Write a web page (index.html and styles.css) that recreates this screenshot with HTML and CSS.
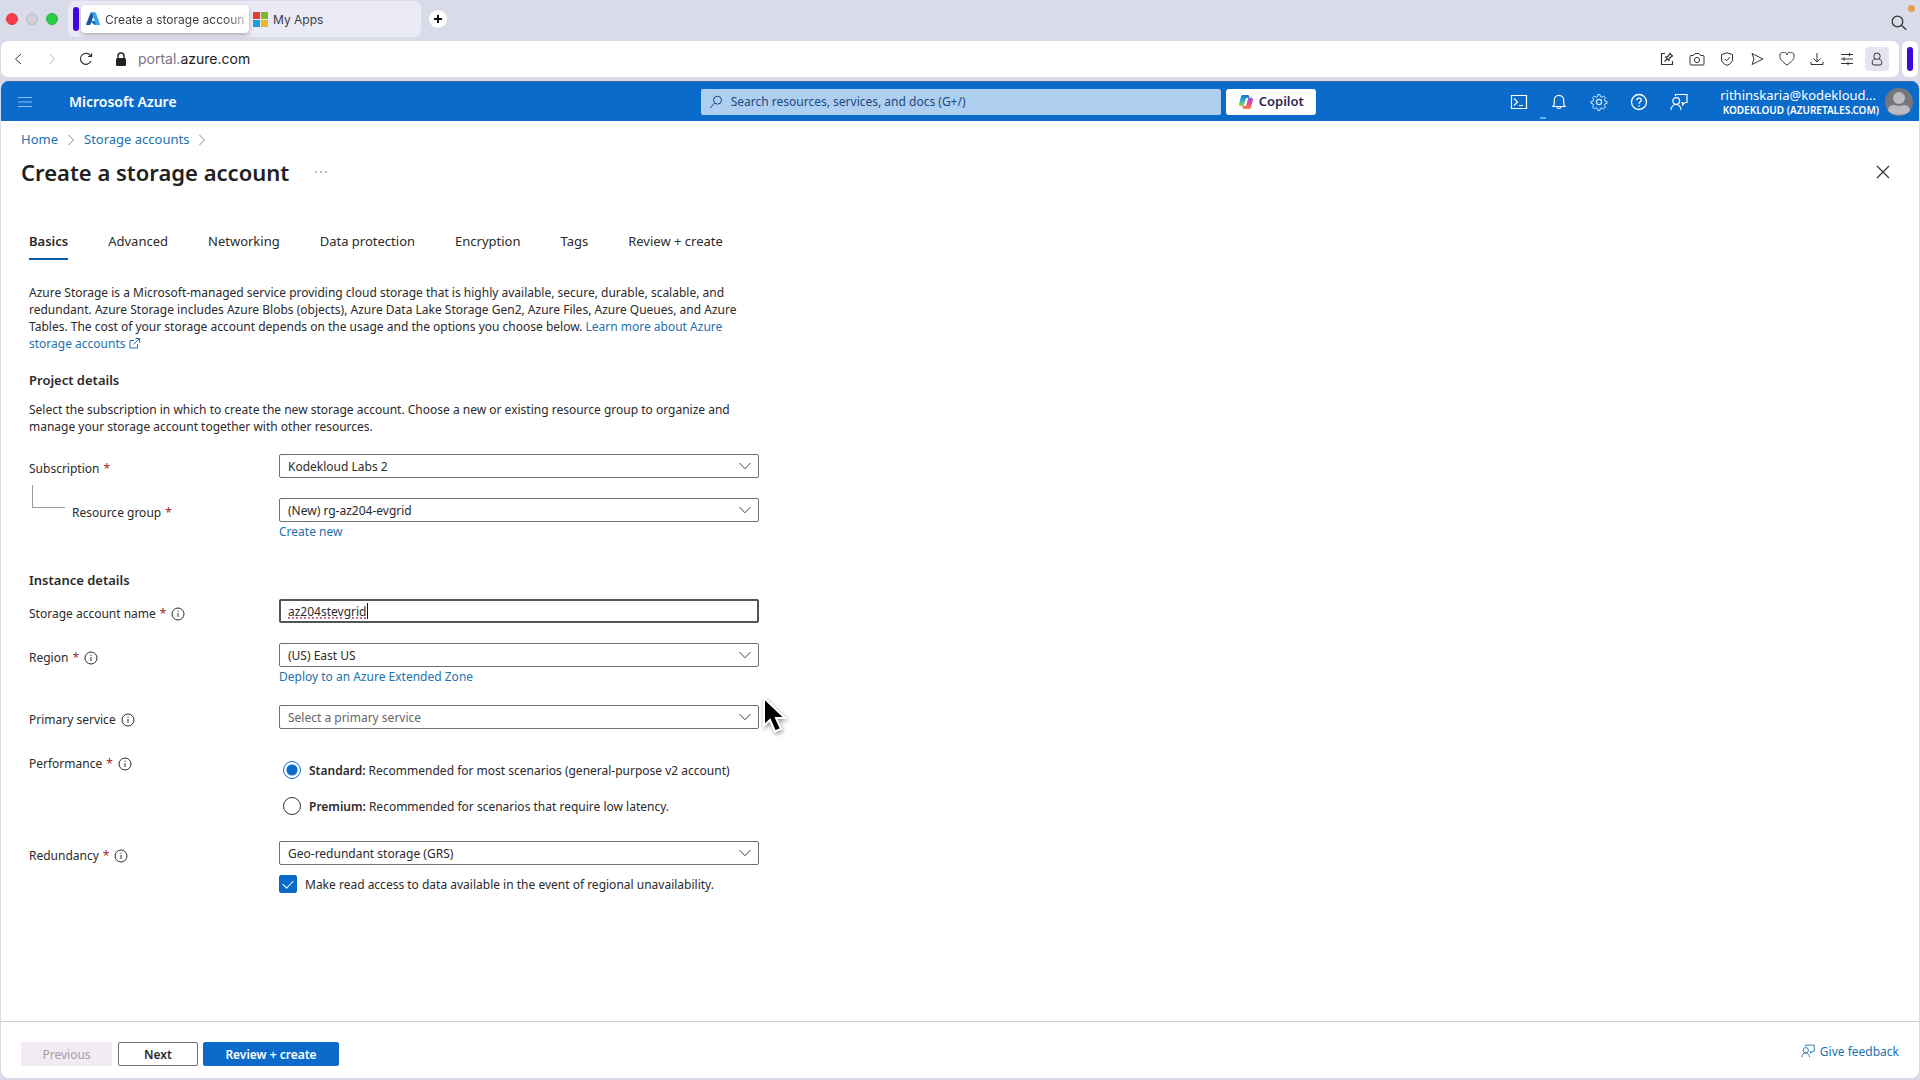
FILE: index.html
```html
<!DOCTYPE html>
<html lang="en">
<head>
<meta charset="utf-8">
<title>Create a storage account - Microsoft Azure</title>
<link rel="stylesheet" href="styles.css">
</head>
<body>
<svg class="sprite" aria-hidden="true">
  <symbol id="i-info" viewBox="0 0 14 14"><circle cx="7" cy="7" r="6" fill="none" stroke="currentColor"/><path d="M7 6v4M7 3.6v1.2" stroke="currentColor" fill="none"/></symbol>
  <symbol id="i-down" viewBox="0 0 12 12"><path d="M.5 3 6 8.800l5.500-5.800" stroke="currentColor" fill="none"/></symbol>
  <symbol id="i-right" viewBox="0 0 8 12"><path d="M1.500 1 6.500 6l-5 5" stroke="currentColor" fill="none"/></symbol>
  <symbol id="i-feedback" viewBox="0 0 18 18"><path d="M5.500 3V1.500H17v8h-2.200L12.500 12V9.500h-1.200M1 17c0-3 2.200-5.500 5-5.500s5 2.500 5 5.500" stroke="currentColor" fill="none" stroke-width="1.200"/><circle cx="6.200" cy="8" r="3.400" fill="none" stroke="currentColor" stroke-width="1.200"/></symbol>
</svg>

<header class="tabstrip">
  <div class="lights">
    <button class="light light-close" aria-label="Close window"></button>
    <button class="light light-min" aria-label="Minimize window"></button>
    <button class="light light-max" aria-label="Zoom window"></button>
  </div>
  <div class="island">
    <span class="island-bar"></span>
    <button class="btab btab-active">
      <svg width="14" height="14" viewBox="0 0 14 14"><path d="M4.800.5h4L4.600 12.300a.8.8 0 0 1-.8.600H.8a.7.7 0 0 1-.7-1z" fill="#155a9c"/><path d="M9.500 9H4.200L8 12.800l3 .2z" fill="#1672bd"/><path d="M9.200.5H5.400c.4.1.6.3.7.6l3.700 11c.1.400-.1.800-.5.900h4c.5 0 .8-.5.600-1L10 1.100A.8.800 0 0 0 9.200.5z" fill="#37a5e8"/></svg>
      <span class="btab-text">Create a storage accoun</span>
    </button>
    <button class="btab">
      <svg width="15" height="15" viewBox="0 0 15 15"><path fill="#e23b36" d="M0 0h7v7H0z"/><path fill="#7fb928" d="M8 0h7v7H8z"/><path fill="#189fd9" d="M0 8h7v7H0z"/><path fill="#efb52b" d="M8 8h7v7H8z"/></svg>
      <span>My Apps</span>
    </button>
  </div>
  <button class="newtab" aria-label="New tab"><svg width="8" height="8" viewBox="0 0 8 8"><path d="M4 0v8M0 4h8" stroke="#111" stroke-width="2"/></svg></button>
  <span class="spacer"></span>
  <button class="plain find" aria-label="Search tabs"><svg width="16" height="16" viewBox="0 0 16 16"><g fill="none" stroke="#333" stroke-width="1.300"><circle cx="6.500" cy="6.500" r="5.300"/><path d="m10.500 10.500 4.800 4.300"/></g></svg></button>
  <span class="rec-dot"></span>
</header>

<div class="urlrow">
  <nav class="urlbar">
    <button class="plain nav" aria-label="Back"><svg width="8" height="12" viewBox="0 0 8 12"><path d="M7 1 1.500 6 7 11" fill="none" stroke="#333"/></svg></button>
    <button class="plain nav nav-off" aria-label="Forward" disabled><svg width="8" height="12" viewBox="0 0 8 12"><path d="m1.500 1 5 5-5 5" fill="none" stroke="currentColor"/></svg></button>
    <button class="plain nav" aria-label="Reload"><svg width="14" height="14" viewBox="0 0 14 14"><path d="M11.800 4.200A5.500 5.500 0 1 0 12 9M9 4.500h3.500V1.200" fill="none" stroke="#333" stroke-width="1.200"/></svg></button>
    <button class="plain address"><svg width="12" height="15" viewBox="0 0 12 15"><path d="M3 7V4a3 3 0 0 1 6 0v3" fill="none" stroke="#222" stroke-width="1.400"/><rect x="1" y="6" width="10" height="8" rx="1.500" fill="#222"/></svg><span><span class="sub">portal.</span>azure.com</span></button>
    <span class="spacer"></span>
    <div class="tools">
      <button class="plain tool" aria-label="Edit"><svg width="14" height="14" viewBox="0 0 14 14"><path d="M5 1.500H1.500v11h11V9M4.500 9.500l2.700-2.700M5.600 5.200l3.300 3.300.5-2.300 3.100-2.200-2.500-2.500-2.200 3.200z" fill="none" stroke="#333" stroke-width="1.200"/></svg></button>
      <button class="plain tool" aria-label="Snapshot"><svg width="16" height="14" viewBox="0 0 16 14"><path d="M1 12V4.500q0-1 1-1h2.500L6 1.500h4l1.500 2H14q1 0 1 1V12q0 1-1 1H2q-1 0-1-1z" fill="none" stroke="#333"/><circle cx="8" cy="8" r="2.600" fill="none" stroke="#333"/></svg></button>
      <button class="plain tool" aria-label="Protection"><svg width="14" height="14" viewBox="0 0 14 14"><path d="m7 .8 5.500 1.700V7c0 3-2 5-5.500 6.300C3.500 12 1.500 10 1.500 7V2.500zM4.500 6.800l2 2 3.300-3.600" fill="none" stroke="#333"/></svg></button>
      <button class="plain tool" aria-label="Send"><svg width="14" height="14" viewBox="0 0 14 14"><path d="M2 1.500 13 7 2 12.500 4 7z" fill="none" stroke="#333" stroke-linejoin="round"/></svg></button>
      <button class="plain tool" aria-label="Favourite"><svg width="16" height="14" viewBox="0 0 16 14"><path d="M8 13C3 9.500 1 7.200 1 4.700A3.600 3.600 0 0 1 8 3a3.600 3.600 0 0 1 7 1.700C15 7.200 13 9.500 8 13z" fill="none" stroke="#333"/></svg></button>
      <button class="plain tool" aria-label="Downloads"><svg width="14" height="14" viewBox="0 0 14 14"><path d="M7 1v8.500M3.500 6.500 7 10l3.500-3.500M1 10v2.500h12V10" fill="none" stroke="#333"/></svg></button>
      <button class="plain tool" aria-label="Setup"><svg width="14" height="14" viewBox="0 0 14 14"><path d="M1 2.500h12M1 7h12M1 11.500h12M9.500.8v3.400M4 5.300v3.400M8 9.800v3.400" fill="none" stroke="#333"/></svg></button>
      <button class="plain tool tool-on" aria-label="Profile"><svg width="14" height="14" viewBox="0 0 14 14"><circle cx="7" cy="4.200" r="3.200" fill="none" stroke="#333"/><path d="M5 6.800C3 7.500 2.200 9 2.200 11q0 2 1.800 2h6q1.800 0 1.800-2c0-2-.8-3.500-2.800-4.200" fill="none" stroke="#333"/></svg></button>
    </div>
  </nav>
  <div class="sidebox"><span class="sidebox-bar"></span></div>
</div>

<div class="portal">
  <header class="azure">
    <div class="azure-left">
      <button class="plain menu" aria-label="Show portal menu"><svg width="14" height="12" viewBox="0 0 14 12"><path d="M0 1.500h14M0 6h14M0 10.500h14" stroke="#8ec0f2"/></svg></button>
      <a class="brand" href="#">Microsoft Azure</a>
    </div>
    <div class="azure-mid">
      <label class="search"><svg width="14" height="14" viewBox="0 0 14 14"><g fill="none" stroke="#1b4a80"><circle cx="8.500" cy="5.200" r="4"/><path d="M5.600 8.200 1 13"/></g></svg><input type="text" aria-label="Search" placeholder="Search resources, services, and docs (G+/)"></label>
      <button class="copilot"><svg width="16" height="16" viewBox="0 0 16 16"><defs><linearGradient id="g1" x2="0" y2="1"><stop stop-color="#1a6fd6"/><stop offset=".5" stop-color="#2bb4c4"/><stop offset="1" stop-color="#b8cf2e"/></linearGradient><linearGradient id="g2" x2="0" y2="1"><stop stop-color="#9a4fe0"/><stop offset=".5" stop-color="#e5489a"/><stop offset="1" stop-color="#f5873f"/></linearGradient></defs><path d="M5 1h4.500c1 0 1.500.5 1.700 1.300L11.600 4H9.500C8.300 4 7.700 4.700 7.400 5.700L6 11c-.3.900-.9 1.200-1.700 1.200H3C1.400 12.200.7 11 1.200 9.400L2.900 3C3.300 1.600 3.900 1 5 1z" fill="url(#g1)"/><path d="M11 15H6.500c-1 0-1.500-.5-1.700-1.300L4.400 12h2.100c1.200 0 1.800-.7 2.100-1.700L10 5c.3-.9.900-1.200 1.700-1.200H13c1.600 0 2.300 1.200 1.800 2.800L13.100 13c-.4 1.400-1 2-2.100 2z" fill="url(#g2)"/></svg>Copilot</button>
    </div>
    <div class="azure-right">
      <button class="plain act" aria-label="Cloud Shell"><svg width="18" height="16" viewBox="0 0 18 16"><path d="M1.500 1.500h15v13h-15zM4 4.500 7.500 8 4 11.500M9 11.500h4" fill="none" stroke="#fff" stroke-width="1.200"/></svg></button>
      <button class="plain act" aria-label="Notifications"><svg width="14" height="16" viewBox="0 0 14 16"><path d="M1 12.500h12c-1-1-1.300-2-1.300-3.500V6a4.700 4.700 0 0 0-9.400 0v3c0 1.500-.3 2.500-1.300 3.500zM5 13c.3 2 3.700 2 4 0" fill="none" stroke="#fff" stroke-width="1.200"/></svg><span class="act-mark"></span></button>
      <button class="plain act" aria-label="Settings"><svg width="18" height="18" viewBox="0 0 18 18"><circle cx="9" cy="9" r="2.600" fill="none" stroke="#d8eaff" stroke-width="1.200"/><path d="m7.700 1.500.4 0h1.800l.5 2 1.400.6 1.900-1 1.700 1.700-1 1.900.6 1.400 2 .5v1.800l-2 .5-.6 1.400 1 1.900-1.700 1.700-1.900-1-1.400.6-.5 2H8.100l-.5-2-1.400-.6-1.900 1-1.700-1.700 1-1.900-.6-1.400-2-.5V8.600l2-.5.6-1.400-1-1.900 1.700-1.700 1.900 1 1.400-.6z" fill="none" stroke="#d8eaff" stroke-linejoin="round"/></svg></button>
      <button class="plain act" aria-label="Help"><svg width="18" height="18" viewBox="0 0 18 18"><g fill="none" stroke="#fff" stroke-width="1.300"><circle cx="9" cy="9" r="7.500"/><path d="M6.700 7.300c0-3 4.800-2.900 4.600-.2C11.200 8.700 9 8.800 9 10.800M9 12v1.500"/></g></svg></button>
      <button class="plain act" aria-label="Feedback"><svg width="18" height="18"><use href="#i-feedback"/></svg></button>
      <button class="plain account">
        <span class="who"><span class="who-name">rithinskaria@kodekloud...</span><span class="who-org">KODEKLOUD (AZURETALES.COM)</span></span>
        <svg width="28" height="28" viewBox="0 0 28 28"><clipPath id="av"><circle cx="14" cy="14" r="14"/></clipPath><g clip-path="url(#av)"><path fill="#77767c" d="M0 0h28v28H0z"/><circle cx="14" cy="10" r="6" fill="#bcbbc1"/><path d="M3 23q0-6 6-6 5 2 10 0 6 0 6 6c-3 5-19 5-22 0z" fill="#bcbbc1"/></g></svg>
      </button>
    </div>
  </header>

  <nav class="crumbs">
    <a href="#">Home</a><svg width="8" height="12"><use href="#i-right"/></svg>
    <a href="#">Storage accounts</a><svg width="8" height="12"><use href="#i-right"/></svg>
  </nav>
  <div class="titlebar">
    <h1>Create a storage account</h1>
    <button class="plain more" aria-label="More actions"><svg width="12" height="2" viewBox="0 0 12 2"><path d="M1 0v2M6 0v2M11 0v2" stroke="#777" stroke-width="1"/></svg></button>
    <span class="spacer"></span>
    <button class="plain" aria-label="Close"><svg width="14" height="14" viewBox="0 0 14 14"><path d="m1 1 12 12M13 1 1 13" stroke="#333" stroke-width="1.200"/></svg></button>
  </div>

  <main class="form">
    <div class="tabs" role="tablist">
      <button class="tab tab-on" role="tab">Basics</button>
      <button class="tab" role="tab">Advanced</button>
      <button class="tab" role="tab">Networking</button>
      <button class="tab" role="tab">Data protection</button>
      <button class="tab" role="tab">Encryption</button>
      <button class="tab" role="tab">Tags</button>
      <button class="tab" role="tab">Review + create</button>
    </div>

    <p class="intro">Azure Storage is a Microsoft-managed service providing cloud storage that is highly available, secure, durable, scalable, and<br>redundant. Azure Storage includes Azure Blobs (objects), Azure Data Lake Storage Gen2, Azure Files, Azure Queues, and Azure<br>Tables. The cost of your storage account depends on the usage and the options you choose below. <a href="#">Learn more about Azure<br>storage accounts <svg width="11" height="11" viewBox="0 0 11 11"><path d="M5 2.500H1v7.500h7.500V6M6.500.5h4v4M10.500.5 4.500 6.500" fill="none" stroke="currentColor"/></svg></a></p>

    <h2>Project details</h2>
    <p class="lead">Select the subscription in which to create the new storage account. Choose a new or existing resource group to organize and<br>manage your storage account together with other resources.</p>

    <div class="row">
      <label class="name" for="sub">Subscription <span class="req">*</span></label>
      <div class="field"><div class="combo"><select id="sub"><option>Kodekloud Labs 2</option></select><svg width="12" height="12"><use href="#i-down"/></svg></div></div>
    </div>
    <div class="row">
      <div class="nested"><span class="elbow"></span><label class="name" for="rg">Resource group <span class="req">*</span></label></div>
      <div class="field"><div class="combo"><select id="rg"><option>(New) rg-az204-evgrid</option></select><svg width="12" height="12"><use href="#i-down"/></svg></div><a href="#">Create new</a></div>
    </div>

    <h2 class="second">Instance details</h2>
    <div class="row">
      <label class="name" for="acct">Storage account name <span class="req">*</span><svg width="14" height="14"><use href="#i-info"/></svg></label>
      <div class="field textbox"><input id="acct" type="text" value="az204stevgrid" spellcheck="false"><span class="caret"></span></div>
    </div>
    <div class="row">
      <label class="name" for="region">Region <span class="req">*</span><svg width="14" height="14"><use href="#i-info"/></svg></label>
      <div class="field"><div class="combo"><select id="region"><option>(US) East US</option></select><svg width="12" height="12"><use href="#i-down"/></svg></div><a href="#">Deploy to an Azure Extended Zone</a></div>
    </div>
    <div class="row">
      <label class="name" for="svc">Primary service<svg width="14" height="14"><use href="#i-info"/></svg></label>
      <div class="field"><div class="combo"><select id="svc" class="empty"><option>Select a primary service</option></select><svg width="12" height="12"><use href="#i-down"/></svg></div>
        <svg class="pointer" width="26" height="38" viewBox="0 0 26 38"><path d="M2 1v27.500l6-5.500 5 11.500 6-2.600L14 21h9z" fill="#000" stroke="#fff" stroke-width="2"/></svg></div>
    </div>
    <div class="row">
      <span class="name" id="perf">Performance <span class="req">*</span><svg width="14" height="14"><use href="#i-info"/></svg></span>
      <div class="field radios" role="radiogroup" aria-labelledby="perf">
        <label class="choice"><input type="radio" name="perf" checked><span><b>Standard:</b> Recommended for most scenarios (general-purpose v2 account)</span></label>
        <label class="choice"><input type="radio" name="perf"><span><b>Premium:</b> Recommended for scenarios that require low latency.</span></label>
      </div>
    </div>
    <div class="row">
      <label class="name" for="red">Redundancy <span class="req">*</span><svg width="14" height="14"><use href="#i-info"/></svg></label>
      <div class="field"><div class="combo"><select id="red"><option>Geo-redundant storage (GRS)</option></select><svg width="12" height="12"><use href="#i-down"/></svg></div>
        <label class="check"><input type="checkbox" checked><span>Make read access to data available in the event of regional unavailability.</span></label></div>
    </div>
  </main>

  <footer class="actions">
    <button class="btn btn-off" disabled>Previous</button>
    <button class="btn btn-next">Next</button>
    <button class="btn btn-main">Review + create</button>
    <span class="spacer"></span>
    <a class="give" href="#"><svg width="14" height="14"><use href="#i-feedback"/></svg>Give feedback</a>
  </footer>
</div>
</body>
</html>
```
FILE: styles.css
```css
* { box-sizing: border-box; }
body {
  margin: 0;
  min-height: 100vh;
  display: flex;
  flex-direction: column;
  background: #d9dbe9;
  color: #2b2a2c;
  font: 12px/17px "Noto Sans", "Open Sans", sans-serif;
}
button, input, select { font: inherit; color: inherit; margin: 0; }
button { cursor: pointer; }
a { color: #2471ae; text-decoration: none; }
svg { display: block; flex: none; }
.sprite { position: absolute; width: 0; height: 0; }
.spacer { flex: 1; }
.plain { border: 0; padding: 0; background: none; display: flex; align-items: center; justify-content: center; }

/* browser tab strip */
.tabstrip { position: relative; display: flex; align-items: center; height: 41px; padding: 0 13px 3px 6px; font-family: Inter, sans-serif; color: #3f3e46; }
.lights { display: flex; gap: 8px; margin-right: 10px; }
.light { width: 12px; height: 12px; padding: 0; border-radius: 50%; border: 1px solid; }
.light-close { background: #fb3a49; border-color: #d83a48; }
.light-min { background: #d0d0da; border-color: #bcbcc6; }
.light-max { background: #2bcb42; border-color: #2cae3e; }
.island { display: flex; align-items: center; width: 353px; height: 36px; padding-left: 5px; border-radius: 7px; background: #eae9f6; }
.island-bar { width: 6px; height: 24px; margin-right: 2px; border-radius: 3px; background: #4008dc; }
.btab { display: flex; align-items: center; gap: 5px; height: 28px; padding: 0 4px; border: 0; background: none; white-space: nowrap; }
.btab-active { width: 168px; padding: 0 5px; border-radius: 4px; background: #fff; box-shadow: 0 2px 4px #0004; }
.btab-text { text-align: left; -webkit-mask-image: linear-gradient(90deg, #000 85%, #0006); mask-image: linear-gradient(90deg, #000 85%, #0006); }
.newtab { width: 18px; height: 18px; margin-left: 8px; padding: 0; border: 0; border-radius: 50%; background: #fff; display: flex; align-items: center; justify-content: center; }
.find { margin-top: 8px; }
.rec-dot { position: absolute; top: 5px; right: 5px; width: 7px; height: 7px; border-radius: 50%; background: #e6a04c; }

/* address bar */
.urlrow { display: flex; gap: 3px; height: 40px; padding: 0 2px 4px 1px; }
.urlbar { flex: 1; display: flex; align-items: center; padding: 0 10px 0 7px; border-radius: 7px; background: #fff; }
.nav { width: 20px; margin-right: 14px; }
.nav-off { color: #bbb; }
.address { gap: 11px; margin-left: 5px; font: 14px/20px Inter, sans-serif; color: #1d1c22; }
.sub { color: #77748a; }
.tools { display: flex; gap: 6px; }
.tool { width: 24px; height: 24px; border-radius: 4px; }
.tool-on { background: #e6e4f1; }
.sidebox { width: 16px; display: flex; align-items: center; justify-content: center; border-radius: 6px; background: #fff; }
.sidebox-bar { width: 6px; height: 24px; border-radius: 3px; background: #4008dc; }

/* portal shell */
.portal { flex: 1; display: flex; flex-direction: column; margin: 0 1px 2px; border-radius: 8px; background: #fff; overflow: hidden; }
.azure { display: grid; grid-template-columns: 29fr 615px 25fr; align-items: center; height: 40px; background: #0b6bcb; border-top: 1px solid #3f6a9c; color: #fff; }
.azure-left, .azure-mid, .azure-right { display: flex; align-items: center; }
.azure-left { padding-left: 17px; gap: 37px; }
.brand { color: #fff; font-size: 14px; font-weight: 600; }
.azure-mid { gap: 5px; }
.search { flex: 1; display: flex; align-items: center; gap: 8px; height: 26px; padding: 0 8px; border-radius: 2px; background: #afcff1; color: #1b4a80; }
.search input { flex: 1; min-width: 0; border: 0; padding: 0; background: none; outline: 0; }
.search input::placeholder { color: #1b4a80; opacity: 1; }
.copilot { display: flex; align-items: center; justify-content: center; gap: 5px; width: 90px; height: 26px; padding: 0; border: 0; border-radius: 3px; background: #fff; color: #2b2550; font-size: 13px; font-weight: 600; }
.azure-right { justify-content: flex-end; padding-right: 6px; }
.act { position: relative; width: 40px; height: 38px; color: #fff; }
.act-mark { position: absolute; left: 1px; bottom: 2px; width: 6px; height: 2px; background: #5fb2f5; }
.account { width: 214px; justify-content: flex-end; gap: 6px; }
.who { display: flex; flex-direction: column; align-items: flex-end; color: #fff; }
.who-name { font-size: 13px; line-height: 16px; margin-right: 3px; }
.who-org { font-size: 10px; line-height: 14px; font-weight: 600; }

.crumbs { display: flex; align-items: center; gap: 9px; padding: 10px 20px 0; color: #888; font-size: 13px; }
.titlebar { display: flex; align-items: center; padding: 8px 29px 0 20px; }
h1 { margin: 0; font-size: 22px; line-height: 32px; font-weight: 600; color: #222; }
.more { margin-left: 26px; }

/* wizard form */
.form { flex: 1; padding: 39px 28px 0; }
.tabs { display: flex; gap: 40px; font-size: 13px; }
.tab { padding: 4px 0 7px; border: 0; border-bottom: 2px solid transparent; background: none; line-height: 20px; white-space: nowrap; }
.tab-on { border-color: #0b5cad; font-weight: 600; }
p { margin: 0; white-space: nowrap; }
.intro { margin-top: 24px; }
.intro svg { display: inline; vertical-align: -1px; }
h2 { margin: 20px 0 12px; font-size: 13px; line-height: 17px; font-weight: 600; }
.lead { margin-bottom: 19px; }
.row { display: grid; grid-template-columns: 250px 480px; margin-bottom: 20px; }
.name { display: flex; align-items: center; gap: 4px; height: 17px; margin-top: 6px; white-space: nowrap; }
.req { color: #a4262c; }
.name svg { margin-left: 1px; }
.nested { display: flex; gap: 7px; }
.elbow { width: 33px; height: 23px; margin: -13px 0 0 3px; border: solid #999; border-width: 0 0 1px 1px; }
.field { position: relative; display: flex; flex-direction: column; align-items: flex-start; }
.field > a { margin-top: 1px; }
.combo { display: grid; width: 100%; align-items: center; }
.combo > * { grid-area: 1 / 1; }
.combo svg { justify-self: end; margin-right: 8px; pointer-events: none; color: #444; }
select, .textbox input { width: 100%; height: 24px; padding: 0 8px; border: 1px solid #6f6e70; border-radius: 2px; background: #fff; appearance: none; outline: 0; }
.empty { color: #666; }
.second { margin: 32px 0 10px; }
.textbox input { padding: 0 7px; border: 2px solid #545355; text-decoration: underline dotted 2px #c0709a; text-underline-offset: 2px; }
.caret { position: absolute; left: 88px; top: 4px; width: 1px; height: 16px; background: #111; }
.pointer { position: absolute; left: 483px; top: -8px; filter: drop-shadow(1px 2px 2px #0006); }
.radios { gap: 16px; padding: 11px 0 5px 4px; }
.choice, .check { display: flex; align-items: center; gap: 8px; height: 20px; white-space: nowrap; }
b { font-weight: 600; }
input[type="radio"], input[type="checkbox"] { appearance: none; width: 18px; height: 18px; flex: none; background: #fff; }
input[type="radio"] { border: 1px solid #333; border-radius: 50%; }
input[type="radio"]:checked { border-color: #0b6bcb; background: radial-gradient(circle, #0b6bcb 5px, #fff 6px); }
.check { margin-top: 9px; }
input[type="checkbox"] { border-radius: 2px; background: #0b6bcb; display: grid; place-items: center; }
input[type="checkbox"]::before { content: ""; width: 9px; height: 5px; border: solid #fff; border-width: 0 0 1px 1px; transform: rotate(-45deg); margin-bottom: 3px; }

/* wizard actions */
.actions { display: flex; align-items: center; height: 57px; padding: 8px 20px 0; border-top: 1px solid #cfced2; }
.btn { height: 24px; padding: 0; border: 1px solid #6f6e70; border-radius: 2px; background: #fff; font-weight: 600; }
.btn-off { width: 91px; margin-right: 6px; border-color: #f2ebf3; background: #f2ebf3; color: #a39ea6; font-weight: 400; }
.btn-next { width: 80px; margin-right: 5px; }
.btn-main { width: 136px; border-color: #0b6bcb; background: #0b6bcb; color: #fff; }
.give { display: flex; align-items: center; gap: 5px; padding-bottom: 6px; }
```
